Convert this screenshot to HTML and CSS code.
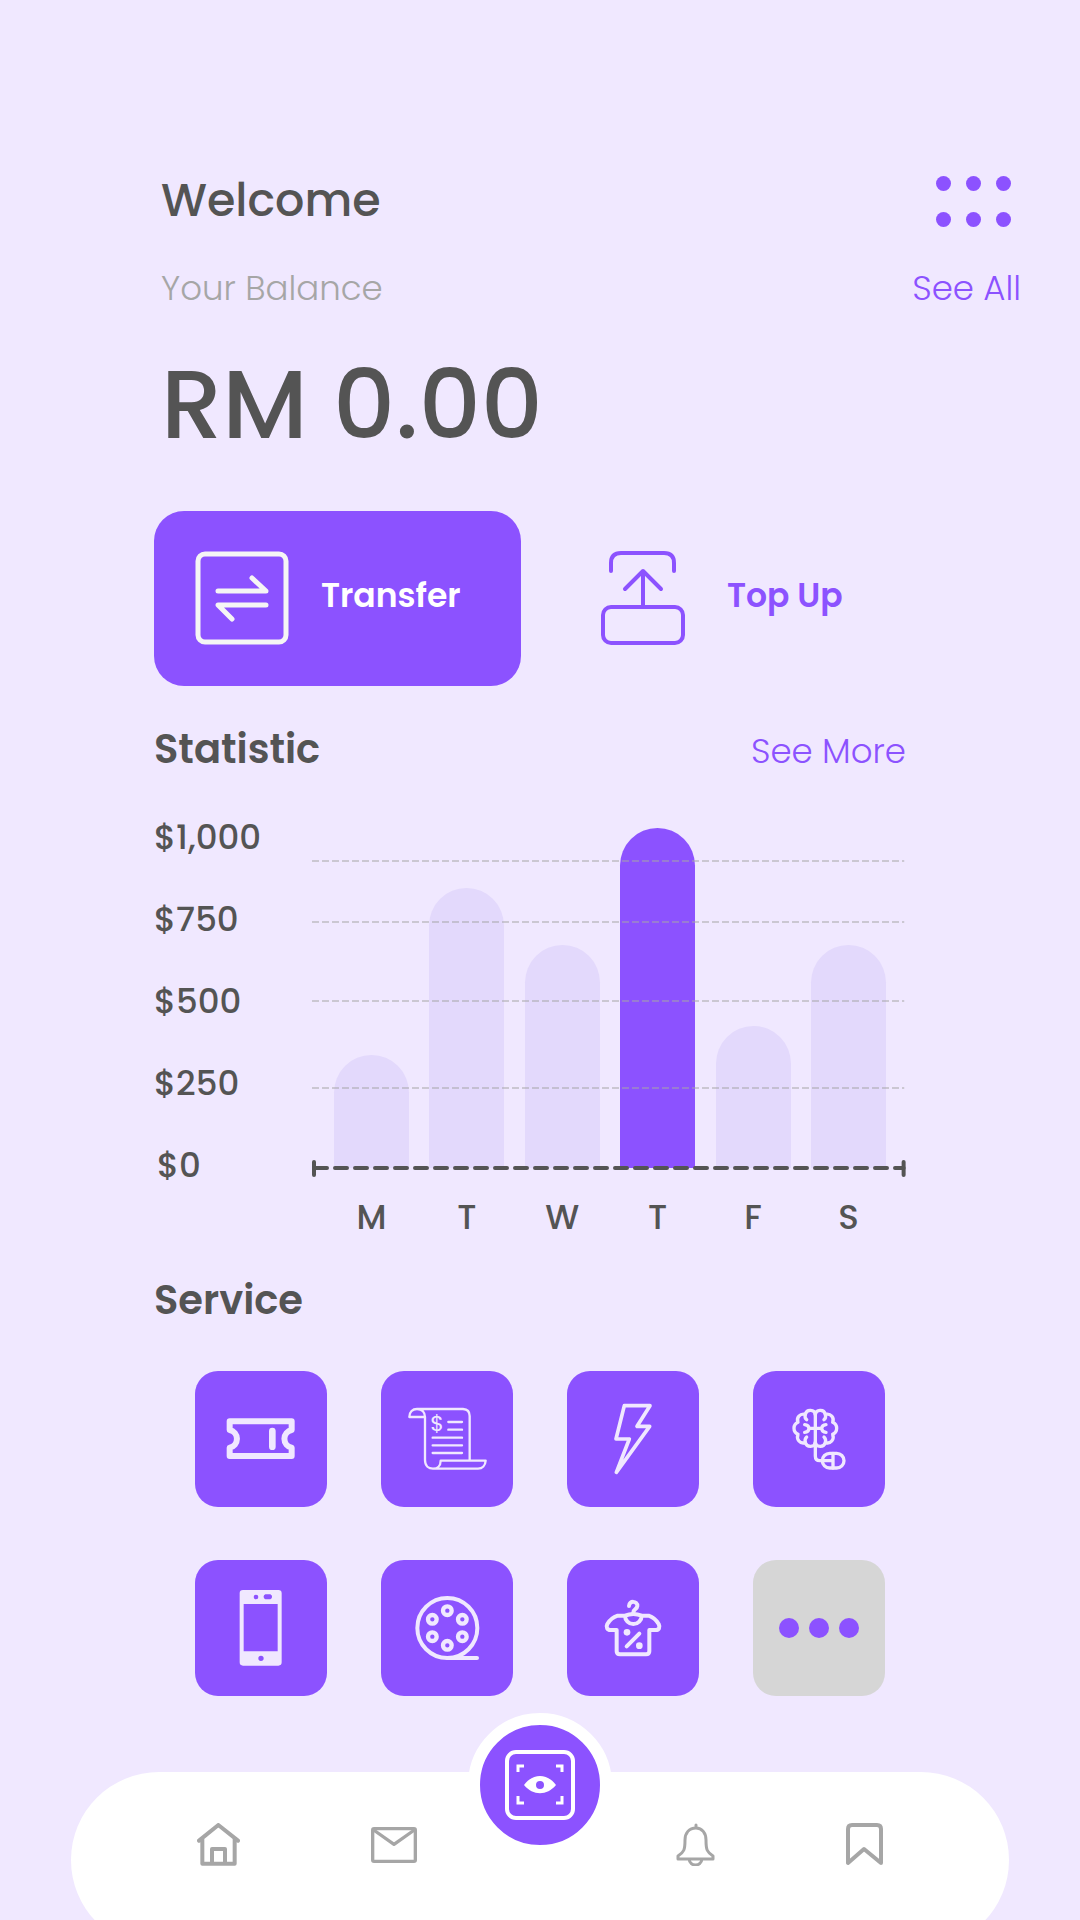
FILE: index.html
```html
<!DOCTYPE html>
<html lang="en">
<head>
<meta charset="utf-8">
<meta name="viewport" content="width=device-width, initial-scale=1">
<title>Wallet</title>
<link rel="stylesheet" href="styles.css">
</head>
<body>
<div class="page">
  <header class="header">
    <div class="header-row">
      <h1 class="welcome">Welcome</h1>
      <button class="menu" type="button" aria-label="Menu">
        <span class="dot"></span><span class="dot"></span><span class="dot"></span>
        <span class="dot"></span><span class="dot"></span><span class="dot"></span>
      </button>
    </div>
    <div class="header-row balance-row">
      <p class="balance-label">Your Balance</p>
      <a class="link" href="#all">See All</a>
    </div>
    <p class="amount">RM 0.00</p>
  </header>

  <main class="main">
    <div class="actions">
      <button class="action action-primary" type="button">
        <svg class="action-icon" viewBox="0 0 94 94" aria-hidden="true">
          <rect x="3" y="3" width="88" height="88" rx="7"/>
          <path d="M23 40H71L57 27M71 54H23L37 68"/>
        </svg>
        Transfer
      </button>
      <button class="action" type="button">
        <svg class="action-icon action-icon-thin" viewBox="0 0 94 94" aria-hidden="true">
          <path d="M10 20V12Q10 2 20 2H63Q73 2 73 12V20M42 56V20M24 38L42 20L60 38"/>
          <rect x="2" y="56" width="80" height="36" rx="8"/>
        </svg>
        Top Up
      </button>
    </div>

    <section class="statistic">
      <div class="section-head">
        <h2 class="title">Statistic</h2>
        <a class="link" href="#more">See More</a>
      </div>
      <div class="chart">
        <ul class="amounts">
          <li>$1,000</li><li>$750</li><li>$500</li><li>$250</li><li class="zero">$0</li>
        </ul>
        <div class="plot-column">
          <div class="plot">
            <div class="bar" style="height:113px"></div>
            <div class="bar" style="height:280px"></div>
            <div class="bar" style="height:223px"></div>
            <div class="bar bar-active" style="height:340px"></div>
            <div class="bar" style="height:142px"></div>
            <div class="bar" style="height:223px"></div>
            <svg class="lines" aria-hidden="true">
              <g class="grid-lines">
                <line x1="0" y1="44" x2="99.7%" y2="44"/>
                <line x1="0" y1="105" x2="99.7%" y2="105"/>
                <line x1="0" y1="184" x2="99.7%" y2="184"/>
                <line x1="0" y1="271" x2="99.7%" y2="271"/>
              </g>
              <g class="axis">
                <line class="axis-dash" x1="3" y1="351" x2="99.6%" y2="351"/>
                <line x1="2" y1="345" x2="2" y2="358"/>
                <line x1="99.6%" y1="345" x2="99.6%" y2="358"/>
              </g>
            </svg>
          </div>
          <ul class="days">
            <li>M</li><li>T</li><li>W</li><li>T</li><li>F</li><li>S</li>
          </ul>
        </div>
      </div>
    </section>

    <section class="service">
      <h2 class="title">Service</h2>
      <div class="tiles">
        <button class="tile" type="button" aria-label="Tickets">
          <svg viewBox="46 333 396 408">
            <path stroke-width="18" d="M150 484H336V510A27 27 0 0 0 336 563V588H150V563A27 27 0 0 0 150 510Z"/>
            <path stroke-width="20" d="M278 513V560"/>
          </svg>
        </button>
        <button class="tile" type="button" aria-label="Bills">
          <svg viewBox="604 333 396 408">
            <path stroke-width="7" d="M736 471H689C689 455 699 447 712 447H850Q870 448 870 468V601M712 447C727 447 736 457 736 471V600C736 618 748 626 760 626C772 626 783 618 783 602H918C917 616 908 626 895 626H760"/>
            <path stroke-width="7" d="M806 486H847M806 509H847M759 533H847M759 556H847M759 579H847"/>
            <text class="bill-sign" x="772" y="513">$</text>
          </svg>
        </button>
        <button class="tile" type="button" aria-label="Electricity">
          <svg viewBox="80 333 396 408">
            <path stroke-width="11" d="M252 437H329L290 499H328L228 637L267 537H227Z"/>
          </svg>
        </button>
        <button class="tile" type="button" aria-label="Learning">
          <svg viewBox="638 333 396 408">
            <g stroke-width="10">
              <path d="M825 464C823 448 799 446 795 463C779 459 767 473 773 487C757 494 757 515 773 523C767 538 779 553 795 548C799 563 823 563 825 547"/>
              <path d="M825 464C827 448 851 446 855 463C871 459 883 473 877 487C893 494 893 515 877 523C883 538 871 553 855 548C851 563 827 563 825 547"/>
              <path d="M795 463Q792 474 799 479M855 463Q858 474 851 479M795 548Q792 537 799 531M855 548Q858 537 851 531"/>
              <path d="M806 505H844M793 494Q805 495 806 505Q805 516 793 517M857 494Q845 495 844 505Q845 516 857 517"/>
              <path d="M825 460V588Q825 602 838 602H878M878 580V624"/>
              <rect x="846" y="580" width="65" height="44" rx="22"/>
            </g>
          </svg>
        </button>
        <button class="tile" type="button" aria-label="Mobile">
          <svg viewBox="46 60 396 408">
            <path class="solid" fill-rule="evenodd" d="M190 150H296Q306 150 306 160V367Q306 377 296 377H190Q180 377 180 367V160Q180 150 190 150ZM192 192V334H294V192ZM222 171A7 7 0 1 0 236 171A7 7 0 1 0 222 171ZM257 163A8 8 0 0 0 257 178H272A8 8 0 0 0 272 163ZM236 355A8 8 0 1 0 252 355A8 8 0 1 0 236 355Z"/>
          </svg>
        </button>
        <button class="tile" type="button" aria-label="Movies">
          <svg viewBox="604 60 396 408">
            <circle stroke-width="12" cx="803" cy="264" r="90"/>
            <path stroke-width="12" d="M803 354H892"/>
            <g stroke-width="13">
              <circle cx="803" cy="212" r="13"/><circle cx="848" cy="238" r="13"/><circle cx="848" cy="290" r="13"/>
              <circle cx="803" cy="316" r="13"/><circle cx="758" cy="290" r="13"/><circle cx="758" cy="238" r="13"/>
            </g>
          </svg>
        </button>
        <button class="tile" type="button" aria-label="Shopping">
          <svg viewBox="80 60 396 408">
            <g stroke-width="12">
              <path d="M266 198C266 181 292 182 291 198C290 209 279 206 279 218"/>
              <path d="M254 227Q279 217 304 227A25 25 0 0 1 254 227H232C220 231 207 242 201 252C196 262 201 270 210 270H229V334Q229 343 239 343H317Q327 343 327 334V270H346C356 270 360 262 355 252C349 242 337 231 325 227H304"/>
              <path d="M297 281L259 319"/>
            </g>
            <circle class="solid" cx="260" cy="277" r="10"/><circle class="solid" cx="297" cy="317" r="10"/>
          </svg>
        </button>
        <button class="tile tile-more" type="button" aria-label="More">
          <span class="more-dot"></span><span class="more-dot"></span><span class="more-dot"></span>
        </button>
      </div>
    </section>
  </main>

  <nav class="nav" aria-label="Main">
    <div class="nav-group">
      <a href="#home" aria-label="Home">
        <svg class="icon-home" viewBox="412 369 129 129"><path stroke-width="12" d="M418 422L476 375L535 422M428 416V491H525V416M457 491V447H496V491"/></svg>
      </a>
      <a href="#messages" aria-label="Messages">
        <svg class="icon-mail" viewBox="936 378 138 108"><rect stroke-width="10" x="941" y="383" width="128" height="98" rx="4"/><path stroke-width="10" d="M944 387L1005 430L1066 387"/></svg>
      </a>
    </div>
    <button class="scan" type="button" aria-label="Scan">
      <svg viewBox="0 0 70 70">
        <rect stroke-width="4" x="2" y="2" width="66" height="66" rx="9"/>
        <path class="corners" d="M13 22V16H19M51 16H57V22M13 46V53H19M51 53H57V46"/>
        <path class="eye" fill-rule="evenodd" d="M19 35C28 23 42 23 51 35C42 46 28 46 19 35ZM31 35A4 4 0 1 0 39 35A4 4 0 1 0 31 35Z"/>
      </svg>
    </button>
    <div class="nav-group nav-group-end">
      <a href="#alerts" aria-label="Alerts">
        <svg class="icon-bell" viewBox="0 0 39 43"><path stroke-width="3" d="M20 2V5M20 5C13 5 9 10 9 17C9 27 8 29 2 33V36H37V33C31 29 30 27 30 17C30 10 26 5 20 5ZM13 36C14 44 25 44 26 36"/></svg>
      </a>
      <a href="#saved" aria-label="Saved">
        <svg class="icon-bookmark" viewBox="0 0 37 43"><path stroke-width="4" d="M2 40V6Q2 2 6 2H31Q35 2 35 6V40L18 26Z"/></svg>
      </a>
    </div>
  </nav>
</div>
</body>
</html>
```
FILE: styles.css
```css
* {
  box-sizing: border-box;
}

body {
  margin: 0;
  background: #f0e8ff;
  color: #545454;
  font-family: Poppins, Inter, sans-serif;
}

h1, h2, p, ul {
  margin: 0;
  padding: 0;
}

ul {
  list-style: none;
}

button {
  margin: 0;
  padding: 0;
  border: 0;
  background: none;
  color: inherit;
  font: inherit;
  cursor: pointer;
}

svg {
  display: block;
  fill: none;
  stroke: currentColor;
  stroke-linecap: round;
  stroke-linejoin: round;
}

.page {
  display: flex;
  flex-direction: column;
  min-height: 100vh;
  overflow: hidden;
}

/* Header */

.header {
  padding: 173px 59px 0 161px;
}

.header-row {
  display: flex;
  align-items: flex-end;
  justify-content: space-between;
}

.welcome {
  font-size: 46px;
  font-weight: 500;
  line-height: 54px;
}

.menu {
  display: grid;
  grid-template-columns: repeat(3, 15px);
  gap: 21px 15px;
  margin-right: 10px;
}

.dot {
  height: 15px;
  border-radius: 50%;
  background: #8c52ff;
}

.balance-row {
  margin-top: 41px;
}

.balance-label,
.link {
  font-size: 34px;
  font-weight: 300;
  line-height: 40px;
}

.balance-label {
  color: #a6a6a6;
}

.link {
  color: #8c52ff;
  text-decoration: none;
}

.amount {
  margin-top: 40px;
  font-size: 97px;
  font-weight: 500;
  line-height: 112px;
}

/* Actions */

.main {
  padding: 51px 174px 76px 154px;
}

.actions {
  display: flex;
  gap: 39px;
}

.action {
  display: flex;
  align-items: flex-start;
  gap: 32px;
  min-width: 367px;
  height: 175px;
  padding: 40px 41px;
  border-radius: 30px;
  color: #8c52ff;
  font-size: 33px;
  font-weight: 600;
  line-height: 90px;
}

.action-primary {
  background: #8c52ff;
  color: #fff;
}

.action-icon {
  width: 94px;
  height: 94px;
  stroke-width: 5;
}

.action-primary .action-icon {
  color: #f5f5f5;
}

.action-icon-thin {
  stroke-width: 4;
}

/* Statistic */

.statistic {
  margin-top: 39px;
}

.section-head {
  display: flex;
  align-items: baseline;
  justify-content: space-between;
}

.title {
  font-size: 40px;
  font-weight: 600;
  line-height: 48px;
}

.chart {
  display: grid;
  grid-template-columns: 158px 1fr;
  align-items: start;
  margin-top: 44px;
  font-size: 34px;
  font-weight: 500;
  line-height: 40px;
}

.amounts {
  display: flex;
  flex-direction: column;
  gap: 42px;
}

.zero {
  padding-left: 3px;
}

.plot {
  position: relative;
  display: flex;
  align-items: flex-end;
  justify-content: space-between;
  height: 351px;
  padding: 0 20px 0 22px;
}

.bar {
  width: 75px;
  border-radius: 38px 38px 0 0;
  background: #e3d9fc;
}

.bar-active {
  background: #8c52ff;
}

.lines {
  position: absolute;
  inset: 0;
  width: 100%;
  height: 100%;
  overflow: visible;
}

.grid-lines {
  stroke: #a6a6a6;
  stroke-opacity: 0.5;
  stroke-width: 2;
  stroke-dasharray: 7 3;
}

.axis {
  stroke: #545454;
  stroke-width: 4;
}

.axis-dash {
  stroke-dasharray: 12 8;
}

.grid-lines line {
  stroke-linecap: butt;
}

.days {
  display: flex;
  justify-content: space-between;
  margin-top: 29px;
  padding: 0 20px 0 22px;
}

.days li {
  width: 75px;
  text-align: center;
}

/* Service */

.service {
  margin-top: 39px;
}

.tiles {
  display: grid;
  grid-template-columns: repeat(4, 132px);
  justify-content: space-between;
  row-gap: 53px;
  margin-top: 47px;
  padding: 0 21px 0 41px;
}

.tile {
  height: 136px;
  border-radius: 23px;
  background: #8c52ff;
  color: #f0e8ff;
}

.tile svg {
  width: 100%;
  height: 100%;
}

.solid {
  fill: currentColor;
  stroke: none;
}

.bill-sign {
  fill: currentColor;
  stroke: none;
  font-size: 66px;
  font-weight: 400;
  text-anchor: middle;
}

.tile-more {
  display: flex;
  align-items: center;
  justify-content: center;
  gap: 10px;
  background: #d6d6d6;
}

.more-dot {
  width: 20px;
  height: 20px;
  border-radius: 50%;
  background: #8c52ff;
}

/* Bottom bar, its lower edge runs past the screen */

.nav {
  display: grid;
  grid-template-columns: 1fr 144px 1fr;
  align-items: start;
  height: 176px;
  margin: auto 71px -28px;
  padding: 0 126px;
  border-radius: 88px;
  background: #fff;
}

.nav-group {
  display: flex;
  align-items: center;
  gap: 131px;
  margin-top: 51px;
  color: #a6a6a6;
}

.nav-group a {
  color: inherit;
}

.nav-group-end {
  justify-content: flex-end;
}

.icon-home {
  width: 43px;
  height: 43px;
}

.icon-mail {
  width: 46px;
  height: 36px;
}

.icon-bell {
  width: 39px;
  height: 43px;
}

.icon-bookmark {
  width: 37px;
  height: 43px;
}

.scan {
  display: grid;
  place-items: center;
  height: 144px;
  margin-top: -59px;
  border: 12px solid #fff;
  border-radius: 50%;
  background: #8c52ff;
  color: #fff;
}

.scan svg {
  width: 70px;
  height: 70px;
}

.corners {
  stroke-width: 3;
  stroke-linecap: butt;
  stroke-linejoin: miter;
}

.eye {
  fill: currentColor;
  stroke: none;
}
```
